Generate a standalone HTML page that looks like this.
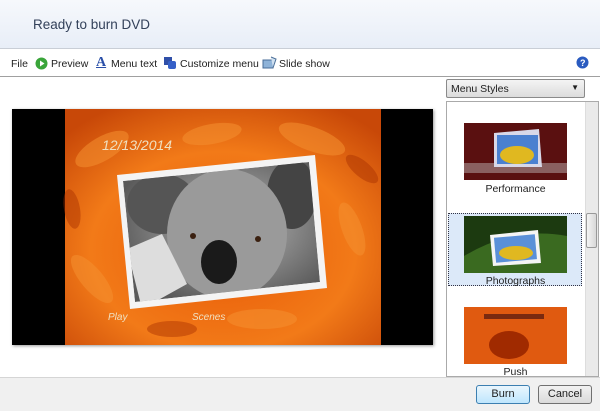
<!DOCTYPE html>
<html><head><meta charset="utf-8"><style>
*{margin:0;padding:0;box-sizing:border-box}
body{width:600px;height:411px;overflow:hidden;font-family:"Liberation Sans",sans-serif;font-size:11px;color:#1e1e1e;background:#fff;position:relative}
.hdr{position:absolute;left:0;top:0;width:600px;height:49px;background:linear-gradient(#f6f8fc,#e8eef7);border-bottom:1px solid #c9ced6}
.hdr span{position:absolute;left:33px;top:17px;font-size:13.5px;color:#33415a}
.tb{position:absolute;left:0;top:50px;width:600px;height:27px;background:#fff;border-bottom:1px solid #a0a0a0}
.tb div{position:absolute;top:8px;font-size:10.5px}
.pv{position:absolute;left:0;top:78px;width:443px;height:298px;background:#fff}
.rp{position:absolute;left:443px;top:78px;width:157px;height:298px;background:#fff}
.dd{position:absolute;left:446px;top:79px;width:139px;height:19px;border:1px solid #8a8a8a;border-radius:2px;background:linear-gradient(#f4f4f4,#dcdcdc);font-size:10.5px;padding:3px 4px}
.list{position:absolute;left:446px;top:101px;width:153px;height:276px;border:1px solid #aaa;background:#fff}
.lbl{position:absolute;width:137px;text-align:center;font-size:10.5px}
.ft{position:absolute;left:0;top:377px;width:600px;height:34px;background:#f0f0f0;border-top:1px solid #d5d5d5}
.btn{position:absolute;top:385px;height:19px;border:1px solid #707070;border-radius:3px;background:linear-gradient(#f2f2f2,#dadada);font-size:11px;text-align:center;line-height:17px}
</style></head><body>
<div class="hdr"><span>Ready to burn DVD</span></div>
<div class="tb">
<div style="left:11px">File</div>
<svg style="position:absolute;left:35px;top:7px" width="13" height="13"><circle cx="6.5" cy="6.5" r="6" fill="#3aa53a"/><path d="M5 3.5L9.5 6.5 5 9.5z" fill="#fff"/></svg>
<div style="left:51px">Preview</div>
<div style="left:96px;top:5px;font-family:'Liberation Serif',serif;font-weight:bold;font-size:14px;color:#2a4fa8;text-decoration:underline">A</div>
<div style="left:111px">Menu text</div>
<svg style="position:absolute;left:163px;top:6px" width="14" height="14"><rect x="1" y="1" width="8" height="8" fill="#2f4fa8"/><rect x="5" y="5" width="8" height="8" rx="2" fill="#3560c8"/></svg>
<div style="left:180px">Customize menu</div>
<svg style="position:absolute;left:262px;top:6px" width="15" height="14"><rect x="1" y="4" width="10" height="8" fill="#8fb3d8" stroke="#4a6e98"/><path d="M9 1l5 2-3 9" stroke="#4a6e98" fill="#cfe0f0"/></svg>
<div style="left:279px">Slide show</div>
<svg style="position:absolute;left:576px;top:6px" width="13" height="13"><circle cx="6.5" cy="6.5" r="6" fill="#2a5bc0"/><text x="4" y="10" font-size="9" fill="#fff" font-weight="bold">?</text></svg>
</div>
<div class="pv">
<svg style="position:absolute;left:12px;top:31px;box-shadow:1px 1px 3px #999" width="421" height="236">
<defs><radialGradient id="og" cx="50%" cy="60%" r="70%"><stop offset="0" stop-color="#e85a08"/><stop offset=".6" stop-color="#f27a18"/><stop offset="1" stop-color="#c84808"/></radialGradient>
<radialGradient id="kg" cx="55%" cy="45%" r="60%"><stop offset="0" stop-color="#a8a8a8"/><stop offset=".5" stop-color="#8a8a8a"/><stop offset="1" stop-color="#5a5a5a"/></radialGradient>
<clipPath id="cp"><polygon points="111,72 297,53 308,173 123,193"/></clipPath></defs>
<rect width="421" height="236" fill="#000"/>
<rect x="53" width="316" height="236" fill="url(#og)"/>
<g fill="#f59030" opacity=".55"><ellipse cx="90" cy="40" rx="30" ry="12" transform="rotate(-30 90 40)"/><ellipse cx="300" cy="30" rx="35" ry="12" transform="rotate(20 300 30)"/><ellipse cx="340" cy="120" rx="28" ry="10" transform="rotate(70 340 120)"/><ellipse cx="80" cy="170" rx="30" ry="11" transform="rotate(50 80 170)"/><ellipse cx="250" cy="210" rx="35" ry="10"/><ellipse cx="200" cy="25" rx="30" ry="10" transform="rotate(-10 200 25)"/></g>
<g fill="#a83000" opacity=".45"><ellipse cx="350" cy="60" rx="20" ry="8" transform="rotate(40 350 60)"/><ellipse cx="60" cy="100" rx="20" ry="8" transform="rotate(80 60 100)"/><ellipse cx="160" cy="220" rx="25" ry="8"/></g>
<polygon points="105,66 303,46 315,179 118,200" fill="#f4f4f4"/>
<g clip-path="url(#cp)">
<polygon points="111,72 297,53 308,173 123,193" fill="url(#kg)"/>
<ellipse cx="150" cy="95" rx="35" ry="30" fill="#555"/><ellipse cx="280" cy="85" rx="25" ry="35" fill="#444"/>
<ellipse cx="215" cy="125" rx="60" ry="65" fill="#9a9a9a"/>
<path d="M115 140 L150 125 175 175 130 200z" fill="#ddd"/>
<ellipse cx="207" cy="153" rx="18" ry="22" fill="#1a1a1a"/>
<circle cx="181" cy="127" r="3" fill="#3a2010"/><circle cx="246" cy="130" r="3" fill="#3a2010"/>
</g>
<text x="90" y="41" font-family="Liberation Sans" font-size="14" fill="#f0e0c0" font-style="italic">12/13/2014</text>
<text x="96" y="211" font-family="Liberation Sans" font-size="10" fill="#f0e0c0" font-style="italic">Play</text>
<text x="180" y="211" font-family="Liberation Sans" font-size="10" fill="#f0e0c0" font-style="italic">Scenes</text>
</svg>
</div>
<div class="rp"></div>
<div class="dd">Menu Styles<span style="position:absolute;right:5px;top:3px;font-size:8px">▼</span></div>
<div class="list">
<svg style="position:absolute;left:17px;top:21px" width="103" height="57"><rect width="103" height="57" fill="#5a1010"/><rect x="0" y="40" width="103" height="10" fill="#8a6060"/><polygon points="30,10 75,6 78,44 30,44" fill="#d8d8e8"/><rect x="33" y="12" width="41" height="29" fill="#4a80d0"/><ellipse cx="53" cy="32" rx="17" ry="9" fill="#e0b820"/></svg>
<div class="lbl" style="left:0;top:81px">Performance</div>
<div style="position:absolute;left:1px;top:111px;width:134px;height:73px;background:#dce9f9;border:1px dotted #334"></div>
<svg style="position:absolute;left:17px;top:114px" width="103" height="57"><rect width="103" height="57" fill="#1c3a10"/><path d="M0 40 Q50 10 103 20 L103 57 0 57z" fill="#3a6a20"/><polygon points="26,19 74,14 77,47 29,50" fill="#f4f4f4"/><rect x="31" y="20" width="41" height="25" fill="#5a90d8" transform="rotate(-5 51 33)"/><ellipse cx="52" cy="37" rx="17" ry="7" fill="#e0b820"/></svg>
<div class="lbl" style="left:0;top:173px">Photographs</div>
<svg style="position:absolute;left:17px;top:205px" width="103" height="57"><rect width="103" height="57" fill="#e05a10"/><ellipse cx="45" cy="38" rx="20" ry="14" fill="#a02a00"/><rect x="20" y="7" width="60" height="5" fill="#7a2a10"/></svg>
<div class="lbl" style="left:0;top:264px">Push</div>
<div style="position:absolute;right:0;top:0;width:13px;height:274px;background:#eaeaea;border-left:1px solid #ddd"></div>
<div style="position:absolute;right:1px;top:111px;width:11px;height:35px;background:linear-gradient(90deg,#f4f4f4,#d8d8d8);border:1px solid #999;border-radius:2px"></div>
</div>
<div class="ft"></div>
<div class="btn" style="left:476px;width:54px;border-color:#3c7fb1;background:linear-gradient(#eaf6fd,#bee6fd)">Burn</div>
<div class="btn" style="left:538px;width:54px">Cancel</div>
</body></html>
